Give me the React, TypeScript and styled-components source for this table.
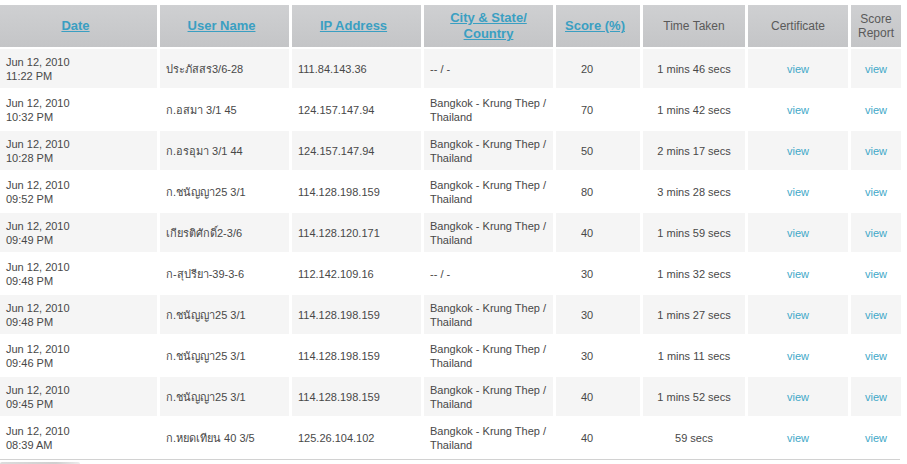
import React from "react";
import styled, { createGlobalStyle } from "styled-components";

const Global = createGlobalStyle`
  html, body { margin: 0; padding: 0; background: #ffffff; }
  body { font-family: "Liberation Sans", Arial, "Noto Sans", sans-serif; }
`;

const Page = styled.div`
  width: 907px;
  height: 464px;
  overflow: hidden;
  padding-top: 3px;
  box-sizing: border-box;
`;

const Table = styled.table`
  border-collapse: separate;
  border-spacing: 3px 2px;
  margin-left: -3px;
  table-layout: fixed;
  width: 906px;
`;

const HeadCell = styled.th<{ $plain?: boolean; $sort?: boolean }>`
  height: 42px;
  padding: 0 ${(p) => (p.$sort ? "8px" : "2px")} 0 2px;
  background: linear-gradient(#cfd0d2, #c4c5c7);
  text-align: center;
  vertical-align: middle;
  font-size: ${(p) => (p.$plain ? "12px" : "13px")};
  font-weight: ${(p) => (p.$plain ? "normal" : "bold")};
  color: #5a5a5a;
  line-height: ${(p) => (p.$plain ? "14px" : "16px")};
`;

const HeadLink = styled.a`
  color: #3a9fc2;
  text-decoration: underline;
`;

const Row = styled.tr<{ $shade: boolean }>`
  background: ${(p) => (p.$shade ? "#f5f5f5" : "#ffffff")};
`;

const Cell = styled.td<{ $align?: "left" | "center" }>`
  height: 39px;
  padding: 0 ${(p) => (p.$align === "center" ? "2px" : "6px")};
  text-align: ${(p) => p.$align ?? "left"};
  vertical-align: middle;
  font-size: 11px;
  line-height: 14px;
  color: #484848;
`;

const ScoreCell = styled(Cell)`
  text-align: center;
  padding-left: 2px;
  padding-right: 24px;
`;

const ViewLink = styled.a`
  color: #3ea8c8;
  text-decoration: none;
`;

const Footer = styled.div`
  width: 900px;
  border-top: 1px solid #d2d2d2;
  height: 4px;
`;

const Tab = styled.div`
  width: 80px;
  height: 3px;
  margin-top: 2px;
  background: linear-gradient(90deg, #dcdcdc, #cfcfcf 70%, #ececec);
  border-radius: 2px 2px 0 0;
`;

type Rec = {
  d: string;
  t: string;
  u: string;
  ip: string;
  loc: string;
  s: string;
  time: string;
};

const rows: Rec[] = [
  { d: "Jun 12, 2010", t: "11:22 PM", u: "ประภัสสร3/6-28", ip: "111.84.143.36", loc: "-- / -", s: "20", time: "1 mins 46 secs" },
  { d: "Jun 12, 2010", t: "10:32 PM", u: "ก.อสมา 3/1 45", ip: "124.157.147.94", loc: "Bangkok - Krung Thep / Thailand", s: "70", time: "1 mins 42 secs" },
  { d: "Jun 12, 2010", t: "10:28 PM", u: "ก.อรอุมา 3/1 44", ip: "124.157.147.94", loc: "Bangkok - Krung Thep / Thailand", s: "50", time: "2 mins 17 secs" },
  { d: "Jun 12, 2010", t: "09:52 PM", u: "ก.ชนัญญา25 3/1", ip: "114.128.198.159", loc: "Bangkok - Krung Thep / Thailand", s: "80", time: "3 mins 28 secs" },
  { d: "Jun 12, 2010", t: "09:49 PM", u: "เกียรติศักดิ์2-3/6", ip: "114.128.120.171", loc: "Bangkok - Krung Thep / Thailand", s: "40", time: "1 mins 59 secs" },
  { d: "Jun 12, 2010", t: "09:48 PM", u: "ก-สุปรียา-39-3-6", ip: "112.142.109.16", loc: "-- / -", s: "30", time: "1 mins 32 secs" },
  { d: "Jun 12, 2010", t: "09:48 PM", u: "ก.ชนัญญา25 3/1", ip: "114.128.198.159", loc: "Bangkok - Krung Thep / Thailand", s: "30", time: "1 mins 27 secs" },
  { d: "Jun 12, 2010", t: "09:46 PM", u: "ก.ชนัญญา25 3/1", ip: "114.128.198.159", loc: "Bangkok - Krung Thep / Thailand", s: "30", time: "1 mins 11 secs" },
  { d: "Jun 12, 2010", t: "09:45 PM", u: "ก.ชนัญญา25 3/1", ip: "114.128.198.159", loc: "Bangkok - Krung Thep / Thailand", s: "40", time: "1 mins 52 secs" },
  { d: "Jun 12, 2010", t: "08:39 AM", u: "ก.หยดเทียน 40 3/5", ip: "125.26.104.102", loc: "Bangkok - Krung Thep / Thailand", s: "40", time: "59 secs" },
];

const widths = [157, 129, 129, 129, 84, 102, 100, 50];

export default function App() {
  return (
    <Page>
      <Global />
      <Table>
        <colgroup>
          {widths.map((w, i) => (
            <col key={i} style={{ width: w }} />
          ))}
        </colgroup>
        <thead>
          <tr>
            <HeadCell $sort><HeadLink href="#">Date</HeadLink></HeadCell>
            <HeadCell $sort><HeadLink href="#">User Name</HeadLink></HeadCell>
            <HeadCell $sort><HeadLink href="#">IP Address</HeadLink></HeadCell>
            <HeadCell><HeadLink href="#">City &amp; State/<br />Country</HeadLink></HeadCell>
            <HeadCell $sort><HeadLink href="#">Score (%)</HeadLink></HeadCell>
            <HeadCell $plain>Time Taken</HeadCell>
            <HeadCell $plain>Certificate</HeadCell>
            <HeadCell $plain>Score<br />Report</HeadCell>
          </tr>
        </thead>
        <tbody>
          {rows.map((r, i) => (
            <Row key={i} $shade={i % 2 === 0}>
              <Cell>{r.d}<br />{r.t}</Cell>
              <Cell>{r.u}</Cell>
              <Cell>{r.ip}</Cell>
              <Cell>{r.loc}</Cell>
              <ScoreCell>{r.s}</ScoreCell>
              <Cell $align="center">{r.time}</Cell>
              <Cell $align="center"><ViewLink href="#">view</ViewLink></Cell>
              <Cell $align="center"><ViewLink href="#">view</ViewLink></Cell>
            </Row>
          ))}
        </tbody>
      </Table>
      <Footer>
        <Tab />
      </Footer>
    </Page>
  );
}
